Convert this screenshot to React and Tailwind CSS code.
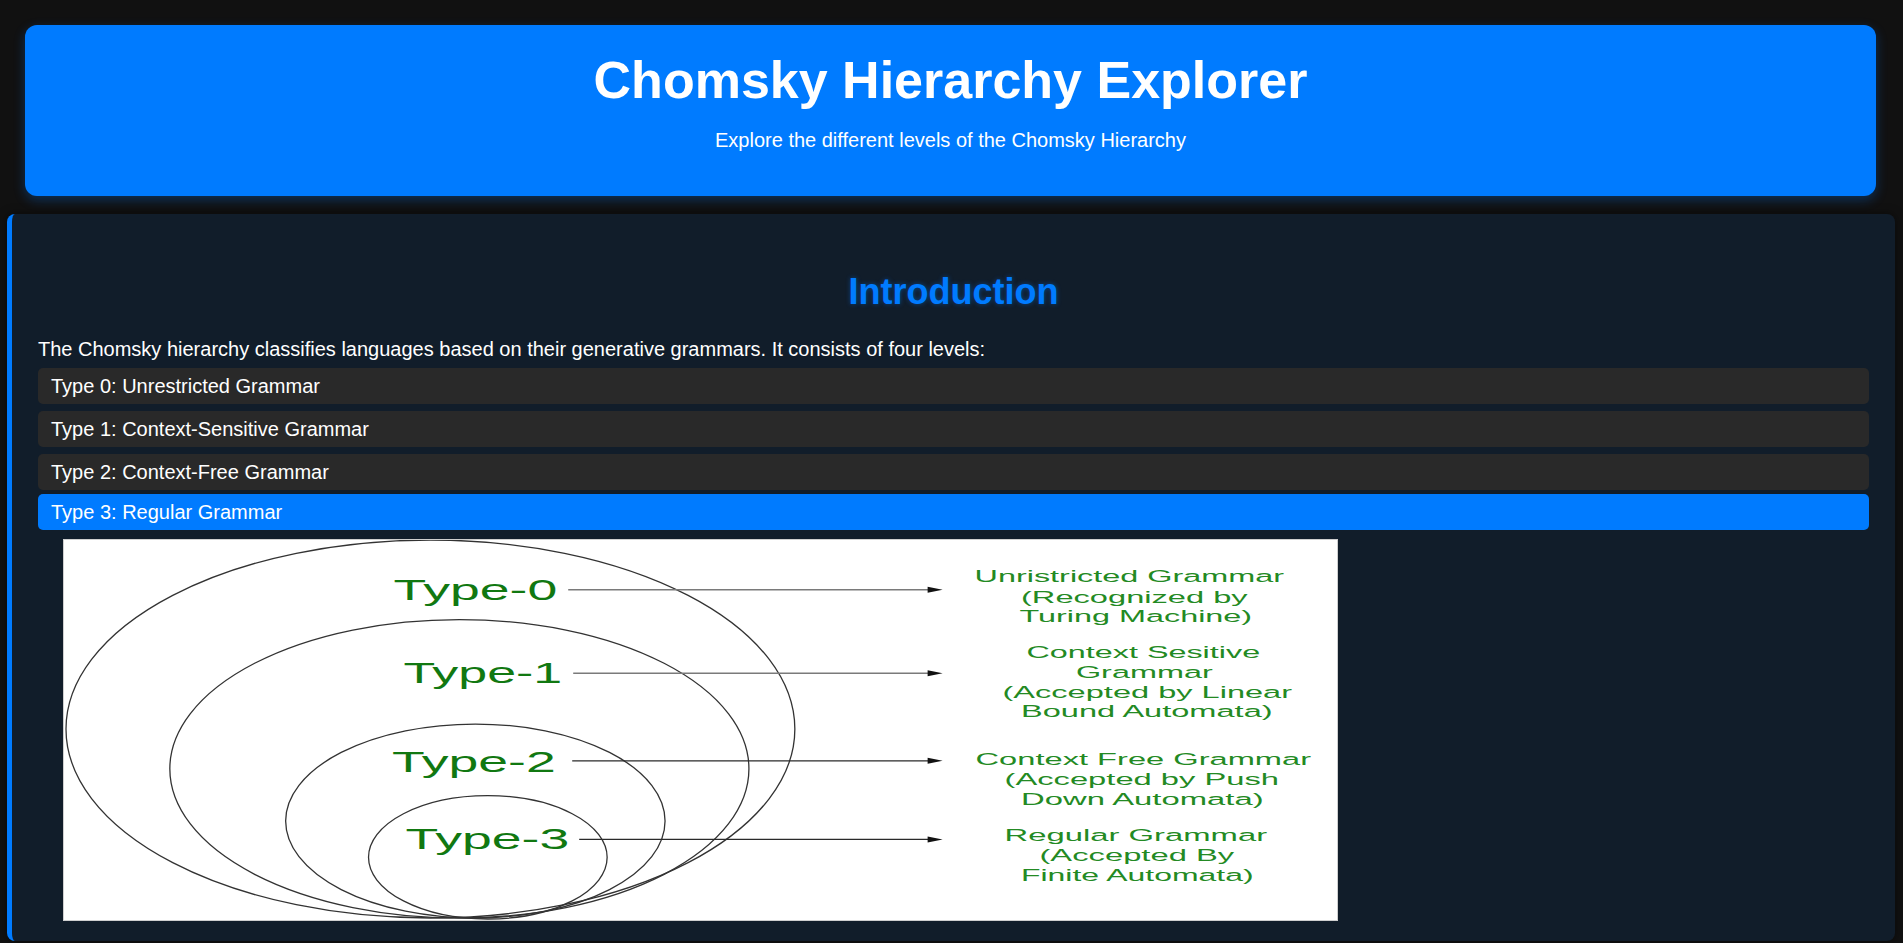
import React, { useState } from 'react';

const levels = [
  'Type 0: Unrestricted Grammar',
  'Type 1: Context-Sensitive Grammar',
  'Type 2: Context-Free Grammar',
  'Type 3: Regular Grammar',
];

// label, baseline, width, arrow row, arrow start, line colour
const typeLabels = [
  { text: 'Type-0', x: 330, y: 60.5, w: 164, ay: 50, ax: 505, stroke: '#7a7a7a' },
  { text: 'Type-1', x: 340, y: 144, w: 159, ay: 134, ax: 510, stroke: '#7a7a7a' },
  { text: 'Type-2', x: 328.5, y: 233, w: 164, ay: 222, ax: 509, stroke: '#2a2a2a' },
  { text: 'Type-3', x: 342, y: 310.5, w: 164, ay: 301, ax: 516, stroke: '#2a2a2a' },
];

const notes = [
  ['Unristricted Grammar', 912, 42, 310],
  ['(Recognized by', 958.5, 63.5, 227],
  ['Turing Machine)', 957, 82, 233],
  ['Context Sesitive', 964, 118.5, 234],
  ['Grammar', 1013.5, 139, 137],
  ['(Accepted by Linear', 940, 158.5, 290],
  ['Bound Automata)', 958.5, 178, 252],
  ['Context Free Grammar', 913, 226, 336],
  ['(Accepted by Push', 942, 246, 275],
  ['Down Automata)', 958.5, 266, 243],
  ['Regular Grammar', 942, 303, 263],
  ['(Accepted By', 977, 323, 195],
  ['Finite Automata)', 958.5, 342.5, 233],
];

const HierarchyDiagram = () => (
  <div className="ml-[25px] mt-[9px] h-[382px] w-[1275px] border border-[#cfcfcf] bg-white">
    <svg viewBox="0 0 1275 382" preserveAspectRatio="none" className="block h-full w-full">
      <g fill="none" stroke="#333" strokeWidth="1.3">
        <ellipse cx="367" cy="190" rx="365" ry="190" />
        <ellipse cx="396" cy="230" rx="290" ry="150" />
        <ellipse cx="412" cy="282.5" rx="190" ry="97.5" />
        <ellipse cx="424.5" cy="319" rx="119.5" ry="62" />
      </g>
      {typeLabels.map(l => (
        <g key={l.text}>
          <text
            x={l.x}
            y={l.y}
            fontSize="29.5"
            fill="#117811"
            textLength={l.w}
            lengthAdjust="spacingAndGlyphs"
            fontFamily="'Liberation Sans', Arial, sans-serif"
          >
            {l.text}
          </text>
          <line x1={l.ax} y1={l.ay} x2="868" y2={l.ay} stroke={l.stroke} strokeWidth="1.4" />
          <polygon points={`865,${l.ay - 3} 880,${l.ay} 865,${l.ay + 3}`} fill="#111" />
        </g>
      ))}
      {notes.map(([t, x, y, w]) => (
        <text
          key={t}
          x={x}
          y={y}
          fontSize="17.5"
          fill="#238a23"
          textLength={w}
          lengthAdjust="spacingAndGlyphs"
          fontFamily="'Liberation Sans', Arial, sans-serif"
        >
          {t}
        </text>
      ))}
    </svg>
  </div>
);

export default function App() {
  const [active, setActive] = useState(3);

  return (
    <div className="min-h-[943px] bg-[#111111] pt-[25px] pb-[2px] font-['Liberation_Sans',Arial,sans-serif] text-white">
      {/* Header */}
      <header className="ml-[25px] mr-[27px] rounded-xl bg-[#007bff] pt-[25px] pb-[44px] text-center shadow-[0_4px_12px_rgba(0,123,255,0.3)]">
        <h1 className="text-[52px] leading-[60px] font-bold">Chomsky Hierarchy Explorer</h1>
        <p className="mt-[19px] text-[20px] leading-[23px]">Explore the different levels of the Chomsky Hierarchy</p>
      </header>

      {/* Intro section */}
      <section className="ml-[7px] mr-[8px] mt-[18px] rounded-lg border-l-[5px] border-[#007bff] bg-[#111d2a] pl-[26px] pr-[26px] pt-[57px] pb-[20px] shadow-[0_0_10px_rgba(0,0,0,0.5)]">
        <h2 className="text-center text-[36px] leading-[41px] font-bold text-[#007bff] [text-shadow:0_0_5px_rgba(0,123,255,0.45)]">
          Introduction
        </h2>
        <p className="mt-[26px] text-[20px] leading-[23px]">
          The Chomsky hierarchy classifies languages based on their generative grammars. It consists of four levels:
        </p>
        <ul className="mt-[7px] flex flex-col">
          {levels.map((lvl, i) => (
            <li
              key={lvl}
              onClick={() => setActive(i)}
              className={`flex h-[36px] cursor-pointer items-center rounded-[5px] px-[13px] text-[20px] leading-[23px] ${
                i === active ? 'bg-[#007bff]' : 'bg-[#292929]'
              } ${i === 0 ? '' : i === 3 ? 'mt-[4px]' : 'mt-[7px]'}`}
            >
              {lvl}
            </li>
          ))}
        </ul>
        <HierarchyDiagram />
      </section>
    </div>
  );
}
